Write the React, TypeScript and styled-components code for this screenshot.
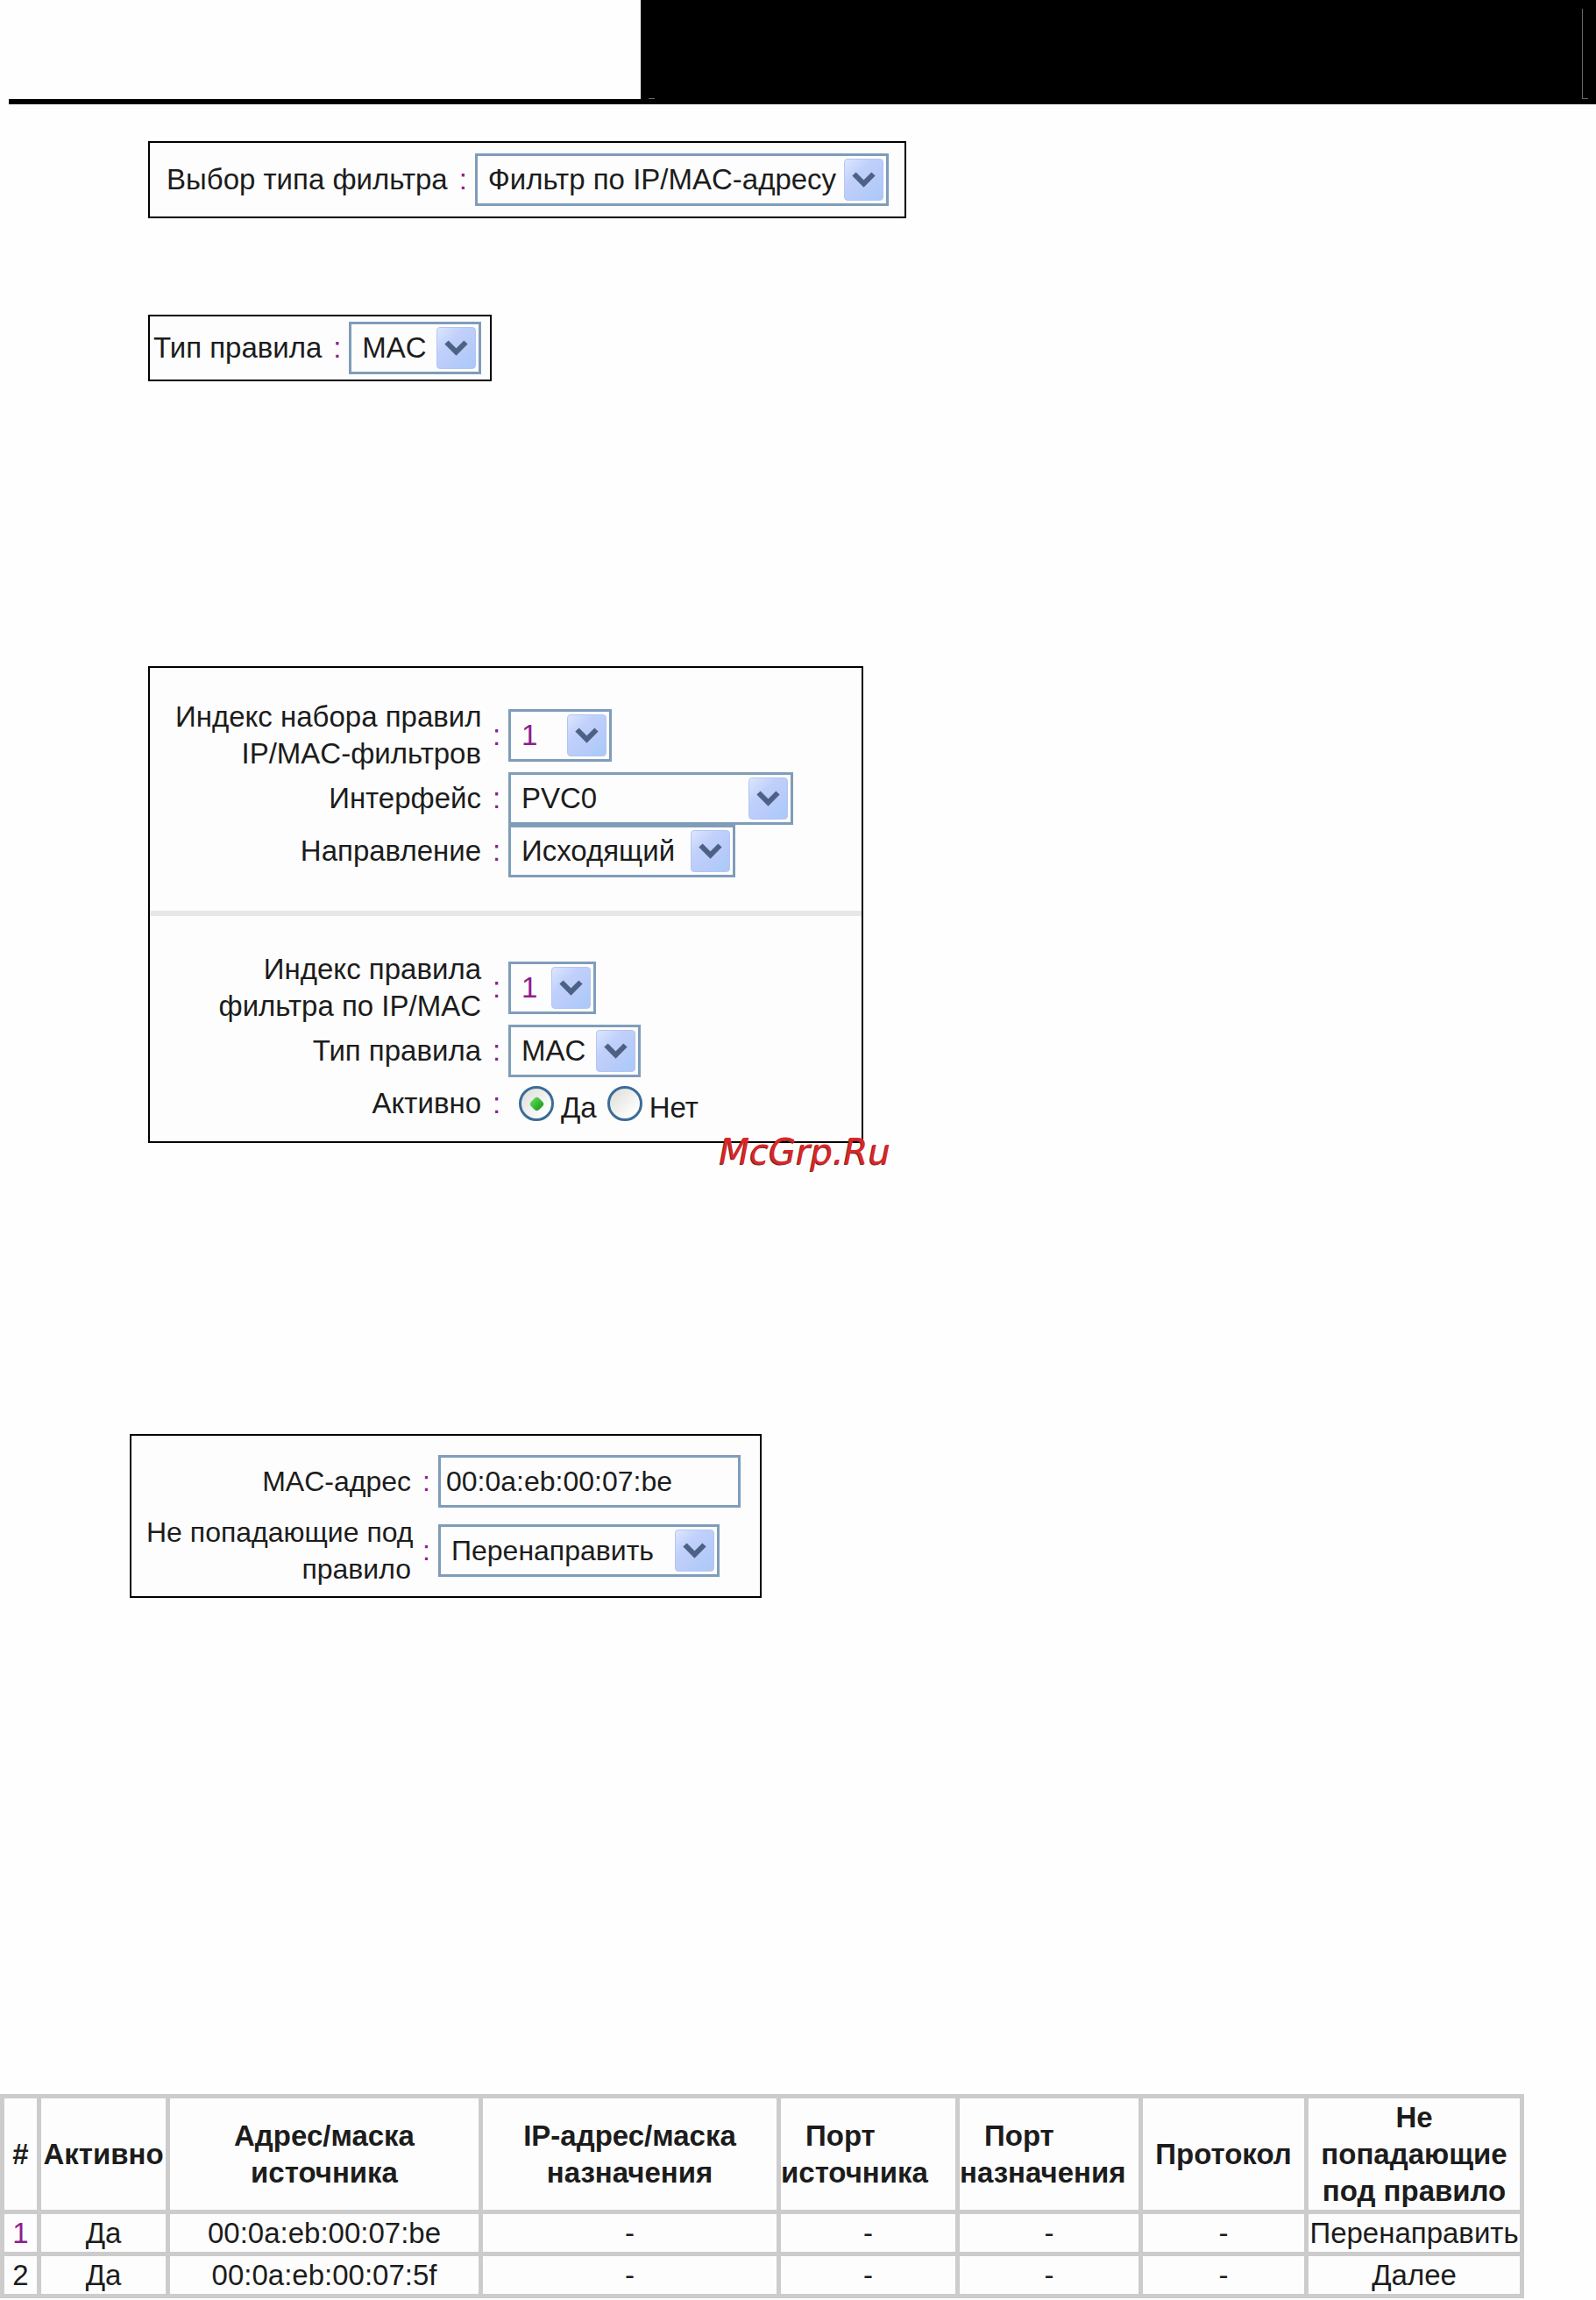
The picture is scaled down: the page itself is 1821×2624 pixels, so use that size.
import React, { useState } from "react";
import styled, { createGlobalStyle, css } from "styled-components";

const theme = {
    font: '"Liberation Sans", Arial, sans-serif',
    text: "#1c1c1c",
    accent: "#8f1c8f",
    field: "#7f9db9",
    paper: "#fdfdfd",
    grid: "#cccccc",
};

const GlobalStyle = createGlobalStyle`
    * {
        box-sizing: border-box;
    }

    body {
        margin: 0;
        background: #fefefe;
        color: ${theme.text};
        font-family: ${theme.font};
        font-size: 33px;
        line-height: 42px;
    }
`;

const Page = styled.main`
    display: flex;
    flex-direction: column;
    align-items: flex-start;
`;

const Header = styled.header`
    width: 100%;
`;

const HeaderTop = styled.div`
    display: flex;
    height: 113px;
    padding-left: 40.15%;
`;

const Banner = styled.div`
    flex: 1;
    display: flex;
    justify-content: space-between;
    align-items: flex-end;
    padding: 0 9px;
    background: #000;
`;

const Tick = styled.span`
    width: 7px;
    height: 1px;
    background: #666;
`;

const Corner = styled.span`
    width: 7px;
    height: 103px;
    border-left: 1px solid #666;
    border-bottom: 1px solid #666;
`;

const HeaderRule = styled.div`
    height: 6px;
    margin-left: 10px;
    background: #000;
`;

const Panel = styled.section<{ $top: number; $left?: number; $padding: string; $compact?: boolean }>`
    position: relative;
    width: fit-content;
    margin-top: ${({ $top }) => $top}px;
    margin-left: ${({ $left = 169 }) => $left}px;
    padding: ${({ $padding }) => $padding};
    border: 2px solid #000;
    background: ${theme.paper};
    font-size: ${({ $compact }) => ($compact ? 32 : 33)}px;
`;

const Fields = styled.div<{ $padding?: string }>`
    padding: ${({ $padding = "0" }) => $padding};
`;

const Row = styled.div<{ $label: string; $tall?: boolean }>`
    display: grid;
    grid-template-columns: ${({ $label }) => $label} 31px max-content;
    align-items: center;
    min-height: ${({ $tall }) => ($tall ? 84 : 60)}px;
`;

const labelText = css`
    text-align: right;
    white-space: pre;
`;

const Label = styled.label`
    ${labelText}
`;

const GroupLabel = styled.span`
    ${labelText}
`;

const Colon = styled.span`
    text-align: center;
    padding-left: 4px;
    color: ${theme.accent};
`;

const SelectWrap = styled.span<{ $width: number }>`
    position: relative;
    display: block;
    width: ${({ $width }) => $width}px;
    height: 60px;
`;

const NativeSelect = styled.select<{ $accent?: boolean }>`
    appearance: none;
    display: block;
    width: 100%;
    height: 100%;
    margin: 0;
    padding: 0 50px 0 12px;
    border: 3px solid ${theme.field};
    border-radius: 0;
    background: ${theme.paper};
    color: ${({ $accent }) => ($accent ? theme.accent : theme.text)};
    font: inherit;
`;

const Arrow = styled.span`
    position: absolute;
    top: 6px;
    right: 6px;
    display: flex;
    align-items: center;
    justify-content: center;
    width: 45px;
    height: 48px;
    border: 1px solid #b3c6f3;
    border-radius: 4px;
    background: linear-gradient(135deg, #dce6fe 0%, #c0d0fb 35%, #b8cbf9 65%, #adcbfa 85%, #b3c5f4 100%);
    pointer-events: none;
`;

const TextInput = styled.input`
    width: 345px;
    height: 60px;
    margin: 0;
    padding: 0 6px;
    border: 3px solid ${theme.field};
    border-radius: 0;
    background: ${theme.paper};
    color: ${theme.text};
    font: inherit;
`;

const RadioGroup = styled.div`
    display: flex;
    align-items: center;
    gap: 12px;
    padding-left: 12px;
`;

const RadioLabel = styled.label`
    display: flex;
    align-items: center;
    gap: 8px;

    span {
        padding-top: 10px;
    }
`;

const Radio = styled.input`
    appearance: none;
    display: grid;
    place-items: center;
    width: 40px;
    height: 40px;
    margin: 0;
    border: 3px solid #3c6c98;
    border-radius: 50%;
    background: linear-gradient(135deg, #dcdcd7, #ffffff 85%);

    &:checked::after {
        content: "";
        width: 13px;
        height: 13px;
        border-radius: 4px;
        background: linear-gradient(90deg, #55d551, #21a121);
        transform: rotate(45deg);
    }
`;

const Divider = styled.hr`
    height: 6px;
    margin: 0;
    border: 0;
    background: #e7e7e7;
`;

const Watermark = styled.span`
    position: absolute;
    right: -33px;
    bottom: -34px;
    color: #dc2626;
    font-family: "DejaVu Sans", Verdana, sans-serif;
    font-size: 40px;
    font-style: oblique;
    line-height: 44px;
    text-shadow: -1px 1px 0 #6b3030;
`;

const RulesTable = styled.table`
    width: 95.5%;
    margin-top: 566px;
    table-layout: fixed;
    border-spacing: 5px;
    background: ${theme.grid};
`;

const Cell = styled.td<{ $accent?: boolean }>`
    height: 43px;
    padding: 0;
    background: ${theme.paper};
    color: ${({ $accent }) => ($accent ? theme.accent : theme.text)};
    text-align: center;
    white-space: nowrap;
`;

const HeadCell = styled.th<{ $port?: boolean }>`
    height: 127px;
    padding: 0;
    background: ${theme.paper};
    font-weight: 700;
    text-align: ${({ $port }) => ($port ? "left" : "center")};
    text-indent: ${({ $port }) => ($port ? 28 : 0)}px;
    white-space: nowrap;
`;

interface SelectProps {
    id: string;
    width: number;
    options: string[];
    accent?: boolean;
}

const Select = ({ id, width, options, accent }: SelectProps) => (
    <SelectWrap $width={width}>
        <NativeSelect id={id} $accent={accent}>
            {options.map((option) => (
                <option key={option}>{option}</option>
            ))}
        </NativeSelect>
        <Arrow>
            <svg width="27" height="18" viewBox="0 0 27 18" aria-hidden="true">
                <path d="M2.500 2.500l11 11l11-11" fill="none" stroke="#4d6185" strokeWidth="6" />
            </svg>
        </Arrow>
    </SelectWrap>
);

interface FieldProps {
    id: string;
    label: string;
    labelWidth?: string;
    children: React.ReactNode;
}

const Field = ({ id, label, labelWidth = "max-content", children }: FieldProps) => (
    <Row $label={labelWidth} $tall={label.includes("\n")}>
        <Label htmlFor={id}>{label}</Label>
        <Colon>:</Colon>
        {children}
    </Row>
);

const columns = [
    { title: "#", width: 37 },
    { title: "Активно", width: 142 },
    { title: "Адрес/маска\nисточника", width: 352 },
    { title: "IP-адрес/маска\nназначения", width: 335 },
    { title: "Порт\nисточника", width: 199, port: true },
    { title: "Порт\nназначения", width: 204, port: true },
    { title: "Протокол", width: 184 },
    { title: "Не\nпопадающие\nпод правило", width: 241 },
];

const totalWidth = columns.reduce((sum, column) => sum + column.width, 0);

const rules = [
    ["1", "Да", "00:0a:eb:00:07:be", "-", "-", "-", "-", "Перенаправить"],
    ["2", "Да", "00:0a:eb:00:07:5f", "-", "-", "-", "-", "Далее"],
];

const App = () => {
    const [active, setActive] = useState("yes");
    const [mac, setMac] = useState("00:0a:eb:00:07:be");

    return (
        <>
            <GlobalStyle />
            <Page>
                <Header>
                    <HeaderTop>
                        <Banner>
                            <Tick />
                            <Corner />
                        </Banner>
                    </HeaderTop>
                    <HeaderRule />
                </Header>

                <Panel $top={42} $padding="12px 18px 12px 19px">
                    <Field id="filter-type" label="Выбор типа фильтра">
                        <Select id="filter-type" width={472} options={["Фильтр по IP/MAC-адресу", "Фильтр по URL"]} />
                    </Field>
                </Panel>

                <Panel $top={110} $padding="6px 10px 6px 4px">
                    <Field id="rule-type" label="Тип правила">
                        <Select id="rule-type" width={151} options={["MAC", "IP"]} />
                    </Field>
                </Panel>

                <Panel $top={325} $padding="0">
                    <Fields $padding="35px 78px 38px 29px">
                        <Field id="set-index" label={"Индекс набора правил\nIP/MAC-фильтров"} labelWidth="349px">
                            <Select id="set-index" width={118} options={["1", "2", "3"]} accent />
                        </Field>
                        <Field id="interface" label="Интерфейс" labelWidth="349px">
                            <Select id="interface" width={325} options={["PVC0", "PVC1"]} />
                        </Field>
                        <Field id="direction" label="Направление" labelWidth="349px">
                            <Select id="direction" width={259} options={["Исходящий", "Входящий"]} />
                        </Field>
                    </Fields>
                    <Divider />
                    <Fields $padding="40px 78px 13px 29px">
                        <Field id="rule-index" label={"Индекс правила\nфильтра по IP/MAC"} labelWidth="349px">
                            <Select id="rule-index" width={100} options={["1", "2", "3"]} accent />
                        </Field>
                        <Field id="set-rule-type" label="Тип правила" labelWidth="349px">
                            <Select id="set-rule-type" width={151} options={["MAC", "IP"]} />
                        </Field>
                        <Row $label="349px">
                            <GroupLabel id="active-label">Активно</GroupLabel>
                            <Colon>:</Colon>
                            <RadioGroup role="radiogroup" aria-labelledby="active-label">
                                <RadioLabel>
                                    <Radio
                                        type="radio"
                                        name="active"
                                        checked={active === "yes"}
                                        onChange={() => setActive("yes")}
                                    />
                                    <span>Да</span>
                                </RadioLabel>
                                <RadioLabel>
                                    <Radio
                                        type="radio"
                                        name="active"
                                        checked={active === "no"}
                                        onChange={() => setActive("no")}
                                    />
                                    <span>Нет</span>
                                </RadioLabel>
                            </RadioGroup>
                        </Row>
                    </Fields>
                    <Watermark>McGrp.Ru</Watermark>
                </Panel>

                <Panel $top={332} $left={148} $padding="22px 22px 10px 17px" $compact>
                    <Field id="mac" label="MAC-адрес" labelWidth="302px">
                        <TextInput id="mac" value={mac} onChange={(e) => setMac(e.target.value)} />
                    </Field>
                    <Fields $padding="7px 0 0">
                        <Field id="unmatched" label={"Не попадающие под\nправило"} labelWidth="302px">
                            <Select id="unmatched" width={321} options={["Перенаправить", "Далее"]} />
                        </Field>
                    </Fields>
                </Panel>

                <RulesTable>
                    <colgroup>
                        {columns.map((column, i) => (
                            <col key={i} style={{ width: `${(column.width / totalWidth) * 100}%` }} />
                        ))}
                    </colgroup>
                    <thead>
                        <tr>
                            {columns.map((column, i) => (
                                <HeadCell key={i} $port={column.port}>
                                    {column.title.split("\n").map((line, n) => (
                                        <React.Fragment key={line}>
                                            {n > 0 && <br />}
                                            {line}
                                        </React.Fragment>
                                    ))}
                                </HeadCell>
                            ))}
                        </tr>
                    </thead>
                    <tbody>
                        {rules.map((rule) => (
                            <tr key={rule[0]}>
                                {rule.map((value, i) => (
                                    <Cell key={i} $accent={value === "1"}>
                                        {value}
                                    </Cell>
                                ))}
                            </tr>
                        ))}
                    </tbody>
                </RulesTable>
            </Page>
        </>
    );
};

export default App;
